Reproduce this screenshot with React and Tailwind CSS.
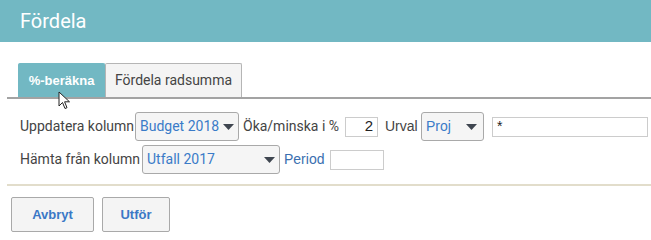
import React from "react";

const roboto = { fontFamily: "Roboto, 'Liberation Sans', sans-serif" };
const arial = { fontFamily: "'Liberation Sans', Arial, sans-serif" };

function Caret() {
  return (
    <svg width="11" height="6" viewBox="0 0 11 6" className="shrink-0">
      <path d="M0 0 L11 0 L5.5 6 Z" fill="#3f4650" />
    </svg>
  );
}

function Select({ label, w, font, pr = "pr-[4px]" }) {
  return (
    <div
      className={`flex items-center justify-between h-[29px] border border-[#a9a9a9] rounded-[3px] bg-[#f5f5f5] pl-[4px] ${pr} ${w}`}
    >
      <span className="text-[14px] text-[#3a7bc8]" style={font}>
        {label}
      </span>
      <Caret />
    </div>
  );
}

export default function App() {
  return (
    <div className="relative w-[651px] h-[239px] bg-white overflow-hidden" style={roboto}>
      <div className="h-[42px] bg-[#72b8c3] flex items-center pl-[20px]">
        <span className="text-white text-[20px] leading-none" style={roboto}>
          Fördela
        </span>
      </div>

      <div className="pt-[21px] pl-[7px]">
        <div className="flex items-end border-b-2 border-[#a3a3a3] pl-[11px]">
          <div className="w-[87px] h-[34px] bg-[#72b8c3] flex items-center justify-center border border-[#72b8c3] border-b-0 rounded-t-[2px]">
            <span className="text-white font-bold text-[13px]" style={arial}>
              %-beräkna
            </span>
          </div>
          <div className="w-[137px] h-[34px] bg-[#f4f4f4] flex items-center justify-center border border-[#b5b5b5] border-b-0 rounded-t-[2px]">
            <span className="text-[#444] text-[14px]" style={roboto}>
              Fördela radsumma
            </span>
          </div>
        </div>
      </div>

      <div className="pl-[20px] pt-[13px]">
        <div className="flex items-center h-[29px] text-[14px] text-[#444]">
          <span className="w-[115px]">Uppdatera kolumn</span>
          <Select label="Budget 2018" w="w-[104px]" font={roboto} />
          <span className="ml-[4px] w-[102px]">Öka/minska i %</span>
          <div className="w-[33px] h-[20px] border border-[#ccc] flex items-center justify-end pr-[4px] text-[15px] text-[#222]" style={arial}>
            2
          </div>
          <span className="ml-[7px] w-[36px]" style={arial}>Urval</span>
          <Select label="Proj" w="w-[63px]" font={arial} pr="pr-[6px]" />
          <div className="ml-[8px] w-[156px] h-[20px] border border-[#ccc] flex items-center pl-[4px] text-[14px] text-[#222]" style={arial}>
            *
          </div>
        </div>

        <div className="flex items-center h-[29px] mt-[4px] text-[14px] text-[#444]">
          <span className="w-[122px]">Hämta från kolumn</span>
          <Select label="Utfall 2017" w="w-[138px]" font={roboto} />
          <span className="ml-[4px] w-[46px] text-[#3a6fb0]" style={arial}>Period</span>
          <div className="w-[54px] h-[20px] border border-[#ccc]" />
        </div>
      </div>

      <div className="mt-[10px] ml-[7px] h-[2px] bg-[#e2ddcb]" />

      <div className="flex gap-[8px] pl-[11px] pt-[11px]">
        <button className="w-[83px] h-[35px] bg-[#f4f4f4] border border-[#a9a9a9] rounded-[2px] text-[13px] font-bold text-[#3a78c6]" style={arial}>
          Avbryt
        </button>
        <button className="w-[68px] h-[35px] bg-[#f4f4f4] border border-[#a9a9a9] rounded-[2px] text-[13px] font-bold text-[#3a78c6]" style={arial}>
          Utför
        </button>
      </div>

      <svg className="absolute left-[58px] top-[91px]" width="13" height="19" viewBox="0 0 13 19">
        <path d="M1 1 L1 15 L4.5 11.5 L7 17.5 L9 16.7 L6.6 10.8 L11.5 10.8 Z" fill="#fff" stroke="#222" strokeWidth="1" strokeLinejoin="round" />
      </svg>
    </div>
  );
}
